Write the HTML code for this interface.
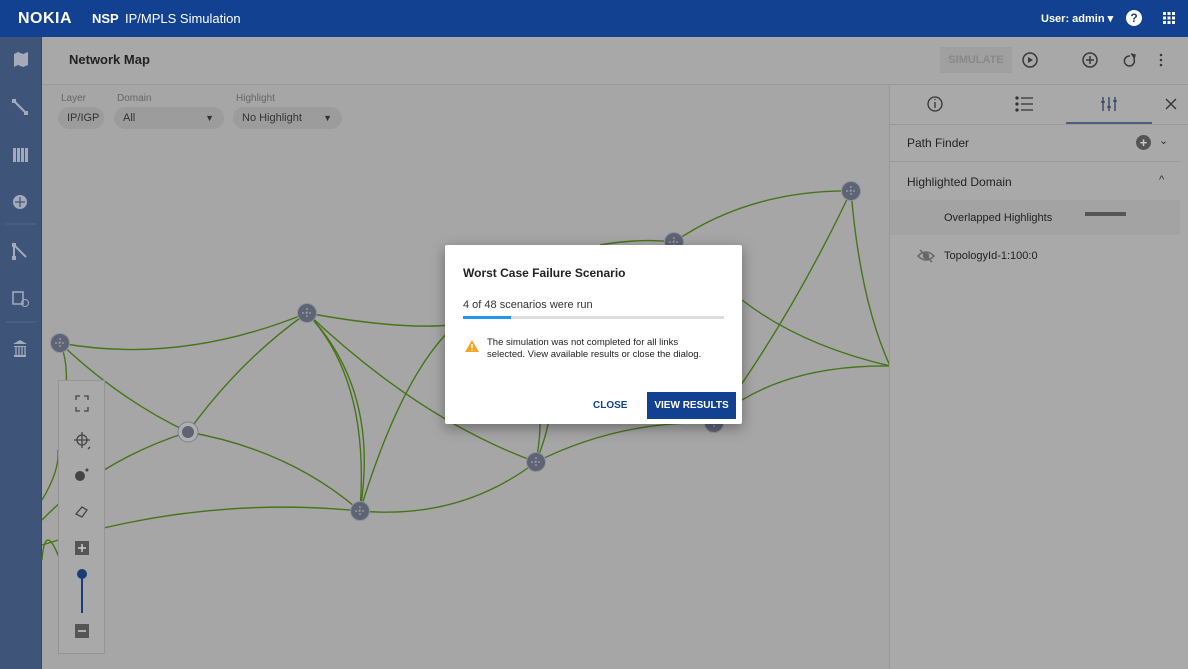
<!DOCTYPE html>
<html><head><meta charset="utf-8"><style>
*{box-sizing:border-box;margin:0;padding:0}
body{width:1188px;height:669px;overflow:hidden;font-family:"Liberation Sans",sans-serif;background:#a6a6a6;position:relative}
.top{position:absolute;left:0;top:0;width:1188px;height:37px;background:#124191;color:#fff}
.side{position:absolute;left:0;top:37px;width:42px;height:632px;background:#3e5479;border-right:1px solid #33476a}
.hdr{position:absolute;left:42px;top:37px;width:1146px;height:48px;border-bottom:1px solid #999;background:#a8a8a8}
.panel{position:absolute;left:889px;top:85px;width:299px;height:584px;background:#a9a9a9;border-left:1px solid #989898}
.abs{position:absolute}
.lbl{font-size:10px;color:#666}
.pill{position:absolute;height:22px;border-radius:11px;background:#9c9c9c;font-size:11px;color:#333;line-height:22px;padding-left:9px}
.dlg{position:absolute;left:445px;top:245px;width:297px;height:179px;background:#fff;box-shadow:0 4px 14px rgba(0,0,0,.35);border-radius:2px}
</style></head><body>
<div class="top">
 <div class="abs" style="left:18px;top:10px;font-weight:bold;font-size:16px;letter-spacing:0.5px">NOKIA</div>
 <div class="abs" style="left:92px;top:11px;font-weight:bold;font-size:13px">NSP</div>
 <div class="abs" style="left:125px;top:11px;font-size:13px">IP/MPLS Simulation</div>
 <div class="abs" style="left:1041px;top:12px;font-weight:bold;font-size:11px">User: admin ▾</div>
 <div class="abs" style="left:1126px;top:10px;width:16px;height:16px;border-radius:50%;background:#fff;color:#124191;font-weight:bold;font-size:12px;text-align:center;line-height:16px">?</div>
 <svg class="abs" style="left:1163px;top:12px" width="12" height="12"><g fill="#fff"><rect x="0" y="0" width="3" height="3"/><rect x="4.5" y="0" width="3" height="3"/><rect x="9" y="0" width="3" height="3"/><rect x="0" y="4.5" width="3" height="3"/><rect x="4.5" y="4.5" width="3" height="3"/><rect x="9" y="4.5" width="3" height="3"/><rect x="0" y="9" width="3" height="3"/><rect x="4.5" y="9" width="3" height="3"/><rect x="9" y="9" width="3" height="3"/></g></svg>
</div>
<div class="side">
 <svg width="42" height="330" style="position:absolute;left:0;top:0" fill="#a3abba" stroke="#a3abba">
  <path d="M14 17 l4-2 5 2 5-2 v13 l-5 2-5-2-4 2z" stroke="none"/>
  <path d="M14 64 L26 76" stroke-width="2"/><rect x="12" y="62" width="4" height="4" stroke="none"/><rect x="24" y="74" width="4" height="4" stroke="none"/>
  <g stroke="none"><rect x="13" y="111" width="3" height="14"/><rect x="17" y="111" width="3" height="14"/><rect x="21" y="111" width="3" height="14"/><rect x="25" y="111" width="3" height="14"/></g>
  <circle cx="20" cy="165" r="7" stroke="none"/><g stroke="#3e5479" stroke-width="1.2"><path d="M20 160 v10 M15 165 h10"/></g>
  <line x1="6" y1="187" x2="36" y2="187" stroke="#56688a"/>
  <path d="M14 208 v12 M14 208 L26 220" stroke-width="2" fill="none"/><rect x="12" y="206" width="4" height="4" stroke="none"/><rect x="12" y="219" width="4" height="4" stroke="none"/>
  <rect x="13" y="255" width="10" height="12" fill="none" stroke-width="1.5"/><circle cx="25" cy="266" r="3.5" fill="none"/>
  <line x1="6" y1="285" x2="36" y2="285" stroke="#56688a"/>
  <path d="M13 307 l7-4 7 4z M14 309 h12 v1 h-12z M14 318 h12 v2 h-12z" stroke="none"/><g stroke-width="1.3"><line x1="16" y1="310" x2="16" y2="318"/><line x1="19" y1="310" x2="19" y2="318"/><line x1="22" y1="310" x2="22" y2="318"/><line x1="25" y1="310" x2="25" y2="318"/></g>
 </svg>
</div>
<svg class="abs" style="left:0;top:0" width="890" height="669" fill="none" stroke="#467518" stroke-width="1.4">
 <defs><g id="nd"><circle r="9.5" fill="#5f6474" stroke="#8f93a0" stroke-width="1"/><path d="M0 -5 v10 M-5 0 h10" stroke="#aab0bc" stroke-width="1" stroke-dasharray="2 1.5"/></g></defs>
 <path d="M60 343 Q180 365 307 313"/>
 <path d="M60 343 Q120 400 188 432"/>
 <path d="M60 343 Q68 360 66 390"/>
 <path d="M42 520 Q100 460 188 432"/>
 <path d="M42 500 Q60 470 58 450"/>
 <path d="M188 432 Q240 360 307 313"/>
 <path d="M188 432 Q290 450 360 511"/>
 <path d="M307 313 Q370 380 360 511"/>
 <path d="M307 313 Q380 390 360 511"/>
 <path d="M307 313 Q420 420 536 462"/>
 <path d="M307 313 Q400 330 450 325"/>
 <path d="M42 545 Q200 495 360 511"/>
 <path d="M42 560 Q45 520 60 560"/>
 <path d="M360 511 Q460 520 536 462"/>
 <path d="M360 511 Q400 380 450 330"/>
 <path d="M536 462 Q620 420 714 423"/>
 <path d="M536 462 Q540 440 540 424"/>
 <path d="M536 462 Q545 440 548 424"/>
 <path d="M674 242 Q750 190 851 191"/>
 <path d="M851 191 Q860 300 890 366"/>
 <path d="M851 191 Q790 320 714 423"/>
 <path d="M742 300 Q800 345 890 366"/>
 <path d="M742 400 Q800 365 890 366"/>
 <path d="M600 245 Q640 238 674 242"/>
 <use href="#nd" x="60" y="343"/><use href="#nd" x="307" y="313"/><use href="#nd" x="360" y="511"/><use href="#nd" x="536" y="462"/><use href="#nd" x="674" y="242"/><use href="#nd" x="851" y="191"/><use href="#nd" x="714" y="423"/>
 <circle cx="188" cy="432" r="10" fill="#b0b0b0" stroke="#7c8090" stroke-width="1"/><circle cx="188" cy="432" r="6" fill="#5f6474" stroke="none"/>
</svg>
<div class="hdr">
 <div class="abs" style="left:27px;top:15px;font-size:13px;font-weight:bold;color:#222">Network Map</div>
 <div class="abs" style="left:898px;top:10px;width:72px;height:26px;background:#a0a0a0;color:#888;font-size:11px;font-weight:bold;text-align:center;line-height:26px">SIMULATE</div>
 <svg class="abs" style="left:978px;top:14px" width="150" height="20" fill="none" stroke="#3a3a3a" stroke-width="1.5"><circle cx="10" cy="9" r="7"/><path d="M8 6 v6 l5-3z" fill="#3a3a3a" stroke="none"/><circle cx="70" cy="9" r="7"/><path d="M70 5 v8 M66 9 h8"/><path d="M110 5 a5 5 0 1 0 4 3"/><path d="M111 3 l4 1-1 4" fill="#3a3a3a"/><circle cx="141" cy="4" r="1.3" fill="#3a3a3a" stroke="none"/><circle cx="141" cy="9" r="1.3" fill="#3a3a3a" stroke="none"/><circle cx="141" cy="14" r="1.3" fill="#3a3a3a" stroke="none"/></svg>
</div>
<div class="abs lbl" style="left:61px;top:93px">Layer</div>
<div class="abs lbl" style="left:117px;top:93px">Domain</div>
<div class="abs lbl" style="left:236px;top:93px">Highlight</div>
<div class="pill" style="left:58px;top:107px;width:46px">IP/IGP</div>
<div class="pill" style="left:114px;top:107px;width:110px">All<span style="position:absolute;right:10px;font-size:9px">▼</span></div>
<div class="pill" style="left:233px;top:107px;width:109px">No Highlight<span style="position:absolute;right:10px;font-size:9px">▼</span></div>
<div class="abs" style="left:58px;top:380px;width:47px;height:274px;background:#a9a9a9;border:1px solid #959595">
 <svg width="47" height="274" fill="none" stroke="#444" stroke-width="1.3">
  <path d="M17 19 v-4 h4 M25 15 h4 v4 M29 26 v4 h-4 M21 30 h-4 v-4"/>
  <circle cx="23" cy="59" r="5"/><path d="M23 51 v16 M15 59 h16"/><path d="M31 66 l-2 2" />
  <circle cx="21" cy="95" r="5" fill="#444" stroke="none"/><circle cx="28" cy="89" r="1.5" fill="#444" stroke="none"/>
  <path d="M17 133 l6-7 5 3 -5 7z"/>
  <rect x="16" y="160" width="14" height="14" fill="#555" stroke="none"/><path d="M23 163 v8 M19 167 h8" stroke="#ccc" stroke-width="1.5"/>
  <line x1="23" y1="196" x2="23" y2="232" stroke="#1a3c7a" stroke-width="2"/><circle cx="23" cy="193" r="5" fill="#1a3c7a" stroke="none"/>
  <rect x="16" y="243" width="14" height="14" fill="#555" stroke="none"/><path d="M19 250 h8" stroke="#ccc" stroke-width="1.5"/>
 </svg>
</div>
<div class="panel">
 <svg class="abs" style="left:0;top:0" width="299" height="40" fill="none" stroke="#333" stroke-width="1.3"><circle cx="45" cy="19" r="7"/><path d="M45 17 v6 M45 14 v1"/><path d="M131 13 h12 M131 19 h12 M131 25 h12" /><circle cx="127" cy="13" r="1" fill="#333"/><circle cx="127" cy="19" r="1" fill="#333"/><circle cx="127" cy="25" r="1" fill="#333"/><path d="M213 12 v14 M219 12 v14 M225 12 v14 M211 17 h4 M217 22 h4 M223 16 h4" stroke="#2a3f66"/><path d="M276 14 l10 10 M286 14 l-10 10"/></svg>
 <div class="abs" style="left:176px;top:37px;width:86px;height:2px;background:#4b5e80"></div>
 <div class="abs" style="left:0;top:39px;width:299px;height:1px;background:#999"></div>
 <div class="abs" style="left:17px;top:51px;font-size:12px;color:#222">Path Finder</div>
 <div class="abs" style="left:246px;top:50px;width:15px;height:15px;border-radius:50%;background:#555;color:#ccc;font-size:13px;line-height:15px;text-align:center;font-weight:bold">+</div>
 <div class="abs" style="left:269px;top:49px;font-size:11px;color:#333">⌄</div>
 <div class="abs" style="left:0;top:76px;width:290px;height:1px;background:#999"></div>
 <div class="abs" style="left:17px;top:90px;font-size:12px;color:#222">Highlighted Domain</div>
 <div class="abs" style="left:269px;top:89px;font-size:11px;color:#333">^</div>
 <div class="abs" style="left:0;top:115px;width:290px;height:35px;background:#a3a3a3"></div>
 <div class="abs" style="left:54px;top:127px;font-size:11px;color:#222">Overlapped Highlights</div>
 <div class="abs" style="left:195px;top:127px;width:41px;height:4px;background:#555"></div>
 <svg class="abs" style="left:27px;top:164px" width="18" height="14" fill="none" stroke="#666" stroke-width="1.5"><path d="M1 7 q8-8 16 0 q-8 8-16 0z"/><circle cx="9" cy="7" r="2.5" fill="#666"/><path d="M3 1 l12 12"/></svg>
 <div class="abs" style="left:54px;top:165px;font-size:11px;color:#222">TopologyId-1:100:0</div>
</div>
<div class="dlg">
 <div class="abs" style="left:18px;top:21px;font-size:12px;font-weight:bold;color:#222">Worst Case Failure Scenario</div>
 <div class="abs" style="left:18px;top:54px;font-size:11px;color:#333">4 of 48 scenarios were run</div>
 <div class="abs" style="left:18px;top:71px;width:261px;height:3px;background:#ddd"></div>
 <div class="abs" style="left:18px;top:71px;width:48px;height:3px;background:#2196f3"></div>
 <svg class="abs" style="left:19px;top:94px" width="16" height="14"><path d="M8 1 L15 13 H1z" fill="#f5a623"/><path d="M8 5 v4 M8 10.5 v1" stroke="#fff" stroke-width="1.5"/></svg>
 <div class="abs" style="left:42px;top:92px;font-size:9.5px;line-height:12px;color:#222">The simulation was not completed for all links<br>selected. View available results or close the dialog.</div>
 <div class="abs" style="left:148px;top:155px;font-size:10px;font-weight:bold;color:#124191">CLOSE</div>
 <div class="abs" style="left:202px;top:147px;width:89px;height:27px;background:#124191;color:#fff;font-size:10px;font-weight:bold;text-align:center;line-height:27px">VIEW RESULTS</div>
</div>
</body></html>
